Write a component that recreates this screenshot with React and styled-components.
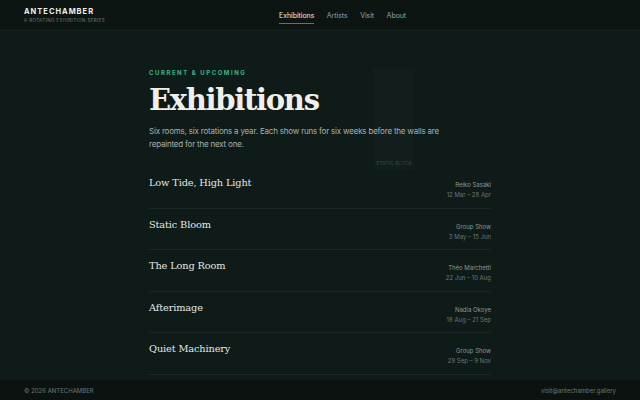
import React from 'react'
import styled, { createGlobalStyle } from 'styled-components'

const GlobalStyle = createGlobalStyle`
    html, body {
        margin:0;
        padding:0;
        background:#0f1b19;
    }
    body {
        font-family:Inter, "Liberation Sans", sans-serif;
    }
    * { box-sizing:border-box; }
`;

const exhibitions = [
    { title: 'Low Tide, High Light', artist: 'Reiko Sasaki', dates: '12 Mar – 28 Apr' },
    { title: 'Static Bloom', artist: 'Group Show', dates: '3 May – 15 Jun' },
    { title: 'The Long Room', artist: 'Théo Marchetti', dates: '22 Jun – 10 Aug' },
    { title: 'Afterimage', artist: 'Nadia Okoye', dates: '18 Aug – 21 Sep' },
    { title: 'Quiet Machinery', artist: 'Group Show', dates: '28 Sep – 9 Nov' },
]

const Page = styled.div`
    width:640px;
    height:400px;
    display:flex;
    flex-direction:column;
    background:#0f1b19;
    overflow:hidden;
`;

const Header = styled.header`
    height:31px;
    flex-shrink:0;
    display:flex;
    align-items:center;
    justify-content:space-between;
    padding:0 24px;
    background:#0d1513;
    border-bottom:1px solid #15211e;
    position:relative;
`;

const Brand = styled.div`
    display:flex;
    flex-direction:column;
    gap:2px;
    margin-top:-1px;
`;

const BrandName = styled.span`
    font-size:7.5px;
    font-weight:700;
    letter-spacing:1px;
    color:#eef0ec;
`;

const Tagline = styled.span`
    font-size:4.5px;
    letter-spacing:0.4px;
    color:#6c7a75;
`;

const Nav = styled.nav`
    position:absolute;
    left:279px;
    top:0;
    height:100%;
    display:flex;
    align-items:center;
    gap:12.5px;
`;

const NavLink = styled.a`
    font-size:7px;
    letter-spacing:-0.05px;
    color:${p => (p.$active ? '#e6eae7' : '#96a19d')};
    text-decoration:none;
    padding:4px 0 3px;
    border-bottom:1px solid ${p => (p.$active ? '#2f8d6b' : 'transparent')};
`;

const Main = styled.main`
    flex:1;
    display:flex;
    justify-content:center;
`;

const Column = styled.div`
    width:342px;
    padding-top:38px;
    position:relative;
`;

const StaticBlock = styled.div`
    position:absolute;
    left:224px;
    top:37px;
    width:42px;
    height:102px;
    background:#111e1c;
    display:flex;
    align-items:flex-end;
    justify-content:center;
    padding-bottom:4px;
    font-size:4.5px;
    letter-spacing:0.3px;
    color:#3c4b47;
`;

const Intro = styled.div`
    position:relative;
`;

const Eyebrow = styled.div`
    font-size:6px;
    font-weight:700;
    letter-spacing:1.55px;
    color:#3bb585;
`;

const Title = styled.h1`
    margin:6px 0 0;
    font-family:"DejaVu Serif", Georgia, serif;
    font-size:29px;
    font-weight:700;
    line-height:36px;
    color:#f1efe8;
    letter-spacing:-1.3px;
`;

const Lead = styled.p`
    margin:7px 0 0;
    max-width:300px;
    font-size:8px;
    letter-spacing:-0.2px;
    line-height:13px;
    color:#a7b1ad;
`;

const List = styled.ul`
    list-style:none;
    margin:16px 0 0;
    padding:0;
`;

const Row = styled.li`
    height:41.5px;
    display:flex;
    justify-content:space-between;
    align-items:flex-start;
    padding-top:10px;
    border-bottom:1px solid #1b2926;
`;

const ShowTitle = styled.span`
    font-family:"DejaVu Serif", Georgia, serif;
    font-size:9.8px;
    letter-spacing:-0.15px;
    color:#e6e6e0;
`;

const Meta = styled.div`
    display:flex;
    flex-direction:column;
    align-items:flex-end;
    gap:3px;
    padding-top:4px;
    font-size:6px;
`;

const Artist = styled.span`
    color:#8c9894;
`;

const Dates = styled.span`
    color:#6b7873;
`;

const Footer = styled.footer`
    height:20px;
    flex-shrink:0;
    display:flex;
    align-items:center;
    justify-content:space-between;
    padding:0 24px;
    background:#0b1210;
    font-size:6px;
    color:#6b7975;
`;

const App = () => {
    return (
        <Page>
            <GlobalStyle />
            <Header>
                <Brand>
                    <BrandName>ANTECHAMBER</BrandName>
                    <Tagline>A ROTATING EXHIBITION SERIES</Tagline>
                </Brand>
                <Nav>
                    <NavLink $active>Exhibitions</NavLink>
                    <NavLink>Artists</NavLink>
                    <NavLink>Visit</NavLink>
                    <NavLink>About</NavLink>
                </Nav>
            </Header>

            <Main>
                <Column>
                    <StaticBlock>STATIC BLOCK</StaticBlock>
                    <Intro>
                        <Eyebrow>CURRENT &amp; UPCOMING</Eyebrow>
                        <Title>Exhibitions</Title>
                        <Lead>Six rooms, six rotations a year. Each show runs for six weeks before the walls are repainted for the next one.</Lead>
                    </Intro>
                    <List>
                        {exhibitions.map(ex => (
                            <Row key={ex.title}>
                                <ShowTitle>{ex.title}</ShowTitle>
                                <Meta>
                                    <Artist>{ex.artist}</Artist>
                                    <Dates>{ex.dates}</Dates>
                                </Meta>
                            </Row>
                        ))}
                    </List>
                </Column>
            </Main>

            <Footer>
                <span>© 2026 ANTECHAMBER</span>
                <span>visit@antechamber.gallery</span>
            </Footer>
        </Page>
    )
}

export default App
